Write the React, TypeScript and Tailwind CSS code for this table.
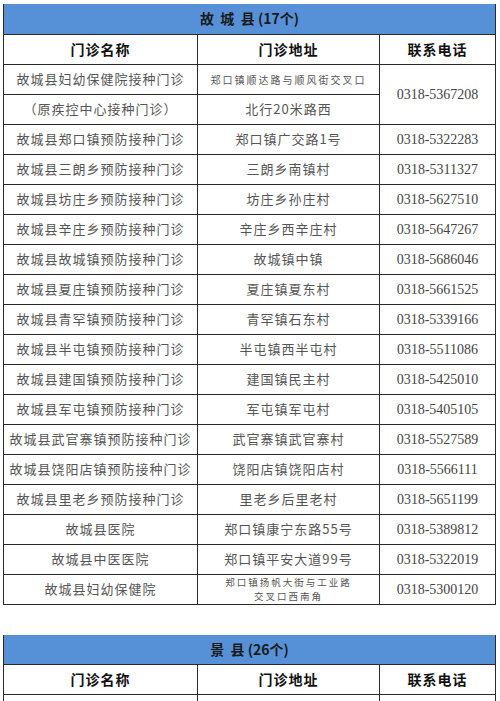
import React from 'react';

type Row = {
  name: string;
  addr: React.ReactNode;
  phone: string;
  small?: boolean;
};

const GUCHENG_ROWS: Row[] = [
  { name: '故城县郑口镇预防接种门诊', addr: '郑口镇广交路1号', phone: '0318-5322283' },
  { name: '故城县三朗乡预防接种门诊', addr: '三朗乡南镇村', phone: '0318-5311327' },
  { name: '故城县坊庄乡预防接种门诊', addr: '坊庄乡孙庄村', phone: '0318-5627510' },
  { name: '故城县辛庄乡预防接种门诊', addr: '辛庄乡西辛庄村', phone: '0318-5647267' },
  { name: '故城县故城镇预防接种门诊', addr: '故城镇中镇', phone: '0318-5686046' },
  { name: '故城县夏庄镇预防接种门诊', addr: '夏庄镇夏东村', phone: '0318-5661525' },
  { name: '故城县青罕镇预防接种门诊', addr: '青罕镇石东村', phone: '0318-5339166' },
  { name: '故城县半屯镇预防接种门诊', addr: '半屯镇西半屯村', phone: '0318-5511086' },
  { name: '故城县建国镇预防接种门诊', addr: '建国镇民主村', phone: '0318-5425010' },
  { name: '故城县军屯镇预防接种门诊', addr: '军屯镇军屯村', phone: '0318-5405105' },
  { name: '故城县武官寨镇预防接种门诊', addr: '武官寨镇武官寨村', phone: '0318-5527589' },
  { name: '故城县饶阳店镇预防接种门诊', addr: '饶阳店镇饶阳店村', phone: '0318-5566111' },
  { name: '故城县里老乡预防接种门诊', addr: '里老乡后里老村', phone: '0318-5651199' },
  { name: '故城县医院', addr: '郑口镇康宁东路55号', phone: '0318-5389812' },
  { name: '故城县中医医院', addr: '郑口镇平安大道99号', phone: '0318-5322019' },
  {
    name: '故城县妇幼保健院',
    addr: (
      <div className="flex flex-col items-center">
        <span className="block h-[14px] leading-[14px]">郑口镇扬帆大街与工业路</span>
        <span className="block h-[14px] leading-[14px]">交叉口西南角</span>
      </div>
    ),
    phone: '0318-5300120',
    small: true,
  },
];

const cell = 'border border-[#2a2a2a] text-center align-middle p-0 h-[30px]';
const cjk = 'font-["Noto_Sans_CJK_SC",sans-serif]';
const dataText = `${cjk} text-[13px] tracking-[1px] text-[#555]`;
const smallText = `${cjk} text-[9.5px] tracking-[2px] text-[#555] leading-[14px]`;
const phoneText = 'font-["Liberation_Serif",serif] text-[14px] text-[#444]';

function TableHead({ title }: { title: React.ReactNode }) {
  return (
    <>
      <tr>
        <td
          colSpan={3}
          className={`bg-[#5690d6] h-[30px] p-0 text-center border-x border-[#2a2a2a] ${cjk} text-[14px] font-bold text-[#1a1a1a]`}
        >
          {title}
        </td>
      </tr>
      <tr>
        {['门诊名称', '门诊地址', '联系电话'].map((h) => (
          <td key={h} className={`${cell} ${cjk} text-[14px] font-bold tracking-[1px] text-[#111]`}>
            {h}
          </td>
        ))}
      </tr>
    </>
  );
}

function Cols() {
  return (
    <colgroup>
      <col className="w-[194px]" />
      <col className="w-[182px]" />
      <col className="w-[116px]" />
    </colgroup>
  );
}

export default function App() {
  return (
    <div className="bg-white w-[500px] min-h-[701px] pt-[4px] pl-[3px]">
      <table className="table-fixed border-collapse w-[492px]">
        <Cols />
        <tbody>
          <TableHead title={<>故&nbsp;&nbsp;城&nbsp;&nbsp;县&nbsp;(17个)</>} />
          <tr>
            <td className={`${cell} ${dataText}`}>故城县妇幼保健院接种门诊</td>
            <td className={`${cell} ${cjk} text-[10px] tracking-[2px] text-[#555]`}>郑口镇顺达路与顺风街交叉口</td>
            <td rowSpan={2} className={`${cell} ${phoneText}`}>
              0318-5367208
            </td>
          </tr>
          <tr>
            <td className={`${cell} ${dataText}`}>（原疾控中心接种门诊）</td>
            <td className={`${cell} ${dataText}`}>北行20米路西</td>
          </tr>
          {GUCHENG_ROWS.map((r) => (
            <tr key={r.name}>
              <td className={`${cell} ${dataText}`}>{r.name}</td>
              <td className={`${cell} ${r.small ? smallText : dataText}`}>{r.addr}</td>
              <td className={`${cell} ${phoneText}`}>{r.phone}</td>
            </tr>
          ))}
        </tbody>
      </table>

      <table className="table-fixed border-collapse w-[492px] mt-[30px]">
        <Cols />
        <tbody>
          <TableHead title={<>景&nbsp;&nbsp;县&nbsp;(26个)</>} />
          <tr>
            <td className={cell}></td>
            <td className={cell}></td>
            <td className={cell}></td>
          </tr>
        </tbody>
      </table>
    </div>
  );
}
